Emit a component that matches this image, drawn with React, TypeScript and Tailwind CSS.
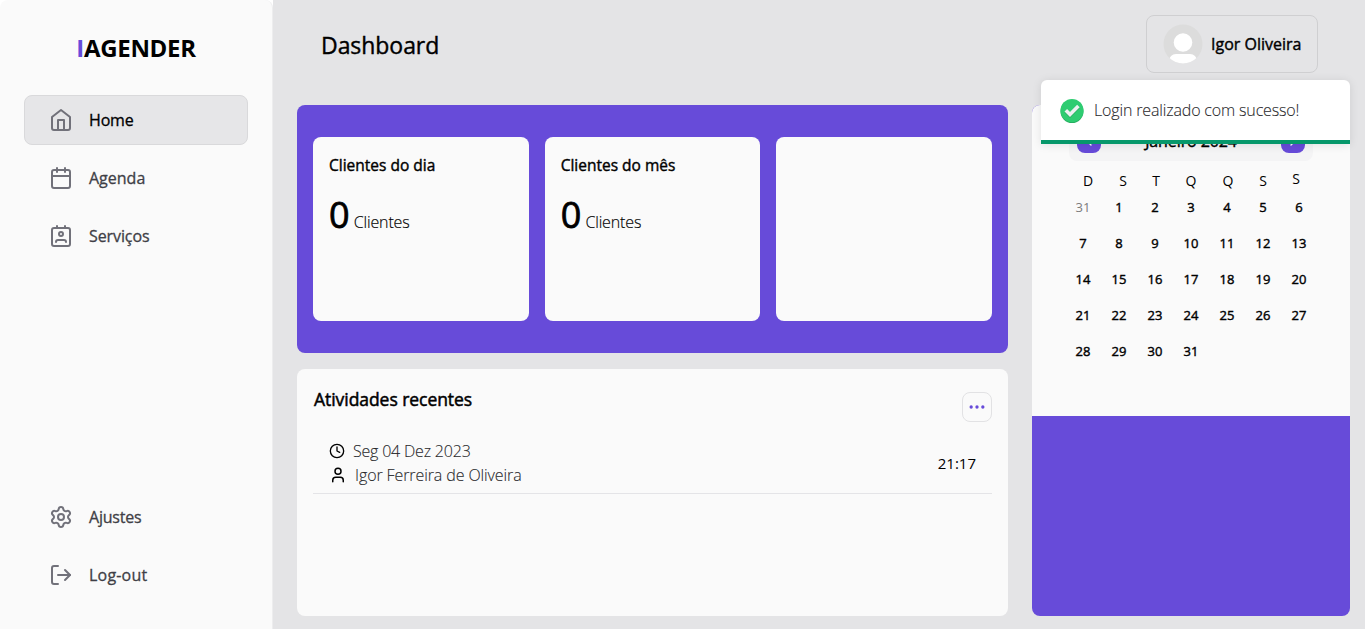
import type { ReactNode } from "react";
import { Calendar, ChevronLeft, ChevronRight, Clock, Ellipsis, LogOut, Settings, User } from "lucide-react";

function HomeIcon() {
  return (
    <svg viewBox="0 0 24 24" className="size-6" fill="none" stroke="currentColor" strokeWidth="2" strokeLinecap="round" strokeLinejoin="round">
      <path d="m3 9 9-7 9 7v11a2 2 0 0 1-2 2H5a2 2 0 0 1-2-2z" />
      <path d="M9 22V12h6v10" />
    </svg>
  );
}

function ContactIcon() {
  return (
    <svg viewBox="0 0 24 24" className="size-6" fill="none" stroke="currentColor" strokeWidth="2" strokeLinecap="round" strokeLinejoin="round">
      <path d="M17 18a2 2 0 0 0-2-2H9a2 2 0 0 0-2 2" />
      <rect width="18" height="18" x="3" y="4" rx="2" />
      <circle cx="12" cy="10" r="2" />
      <path d="M8 2v2M16 2v2" />
    </svg>
  );
}

function SuccessIcon() {
  return (
    <svg viewBox="0 0 24 24" className="mt-px size-6 shrink-0">
      <circle cx="12" cy="12.5" r="11.5" fill="#27ae60" />
      <circle cx="12" cy="11.5" r="11.5" fill="#2ecc71" />
      <path d="M5.8 12.2 10 16.4 18.4 8" fill="none" stroke="#27ae60" strokeWidth="3.6" />
      <path d="M5.8 11.2 10 15.4 18.4 7" fill="none" stroke="#ecf0f1" strokeWidth="3.6" />
    </svg>
  );
}

function Avatar() {
  return (
    <svg viewBox="0 0 40 40" className="size-10 shrink-0">
      <defs>
        <clipPath id="avatar-clip">
          <circle cx="20" cy="20" r="19.5" />
        </clipPath>
      </defs>
      <g clipPath="url(#avatar-clip)">
        <rect width="40" height="40" fill="#dcdcdc" />
        <circle cx="20" cy="18.5" r="9.3" fill="#fff" />
        <rect x="6" y="30" width="28" height="16" rx="7" fill="#fff" />
      </g>
    </svg>
  );
}

function NavItem({ icon, active, children, text }: { icon: ReactNode; active?: boolean; children: ReactNode; text?: string }) {
  return (
    <a className={`flex h-[50px] items-center gap-4 rounded-lg border pl-6 text-base ${active ? "border-[#d9d9db] bg-[#e6e6e8] text-black" : "border-transparent text-[#3f3f46]"}`}>
      <span className="text-[#71717a]">{icon}</span>
      <span className={`[-webkit-text-stroke:0.3px_currentColor] ${text ?? ""}`}>{children}</span>
    </a>
  );
}

function StatCard({ title, value }: { title?: string; value?: number }) {
  return (
    <div className="flex flex-col rounded-lg bg-[#fafafa] p-4">
      {title && (
        <>
          <h3 className="text-[15.5px] leading-6 [-webkit-text-stroke:0.4px_currentColor]">{title}</h3>
          <p className="mt-[18px] leading-10">
            <span className="text-4xl leading-10 [-webkit-text-stroke:0.8px_currentColor]">{value}</span>{" "}
            <span className="font-light tracking-[-0.15px] [-webkit-text-stroke:0.15px_currentColor]">Clientes</span>
          </p>
        </>
      )}
    </div>
  );
}

const weekdays = [
  { label: "D", style: "pl-2.5" },
  { label: "S", style: "pl-2" },
  { label: "T", style: "pl-0.5" },
  { label: "Q", style: "" },
  { label: "Q", style: "pl-0.5" },
  { label: "S", style: "" },
  { label: "S", style: "pr-1.5 pb-1" },
];
const days = Array.from({ length: 32 }, (_, i) => i || 31);

export default function App() {
  return (
    <div className="relative flex h-[629px] w-[1365px] overflow-hidden bg-[#e4e4e6] font-['Open_Sans',sans-serif] text-base text-black">
      <div className="w-[273px] shrink-0 bg-white">
        <aside className="flex h-full flex-col rounded-t-lg border-r border-[#ededee] bg-[#fafafa] px-6 pb-[29px]">
          <h1 className="mt-7 h-[39px] text-center text-2xl leading-10 font-bold tracking-[-0.3px]">
            <span className="text-[#674bd9]">I</span>AGENDER
          </h1>
          <nav className="mt-7 flex flex-col gap-2">
            <NavItem icon={<HomeIcon />} active text="tracking-[-0.15px]">Home</NavItem>
            <NavItem icon={<Calendar className="size-6" />}>Agenda</NavItem>
            <NavItem icon={<ContactIcon />} text="tracking-[-0.1px]">Serviços</NavItem>
          </nav>
          <nav className="mt-auto flex flex-col gap-2">
            <NavItem icon={<Settings className="size-6" />} text="tracking-[-0.2px]">Ajustes</NavItem>
            <NavItem icon={<LogOut className="size-6" />} text="tracking-[0.2px]">Log-out</NavItem>
          </nav>
        </aside>
      </div>

      <div className="flex flex-1 flex-col pr-[15px] pb-[13px] pl-6">
        <header className="flex h-[105px] shrink-0 items-start justify-between pt-[15px] pr-8 pl-6">
          <h2 className="pt-2.5 text-[23px] leading-10 tracking-[-0.05px] [-webkit-text-stroke:0.4px_currentColor]">Dashboard</h2>
          <button className="flex h-[58px] w-[172px] items-center gap-2 rounded-lg border border-[#cfcfd1] pl-4">
            <Avatar />
            <span className="whitespace-nowrap [-webkit-text-stroke:0.4px_currentColor]">Igor Oliveira</span>
          </button>
        </header>

        <div className="flex min-h-0 flex-1 gap-6">
          <main className="flex w-[711px] flex-col gap-4">
            <section className="grid h-[248px] grid-cols-3 gap-4 rounded-lg bg-[#674bd9] px-4 py-8">
              <StatCard title="Clientes do dia" value={0} />
              <StatCard title="Clientes do mês" value={0} />
              <StatCard />
            </section>

            <section className="flex-1 rounded-lg bg-[#fafafa] px-4">
              <div className="flex h-[54px] justify-between">
                <h3 className="pt-4 pl-px text-[17.5px] leading-7 tracking-[-0.05px] [-webkit-text-stroke:0.5px_currentColor]">Atividades recentes</h3>
                <button className="mt-[23px] grid size-[30px] place-items-center rounded-lg border border-[#e2e2e4]">
                  <Ellipsis className="size-5 text-[#674bd9]" />
                </button>
              </div>
              <div className="mt-4 flex h-[55px] items-start justify-between border-b border-[#e4e4e7] px-4 font-light">
                <div className="tracking-[-0.1px] text-[#27272a]">
                  <p className="flex h-6 items-center gap-2">
                    <Clock className="size-4 text-black" />
                    <span className="tracking-[-0.2px] [-webkit-text-stroke:0.1px_currentColor]">Seg 04 Dez 2023</span>
                  </p>
                  <p className="flex h-6 items-center gap-2">
                    <User className="size-[18px] text-black" />
                    <span className="[-webkit-text-stroke:0.1px_currentColor]">Igor Ferreira de Oliveira</span>
                  </p>
                </div>
                <time className="text-[15px] leading-[49px] font-normal">21:17</time>
              </div>
            </section>
          </main>

          <section className="flex w-[318px] flex-col overflow-hidden rounded-lg bg-[#674bd9]">
            <div className="h-[311px] bg-[#fafafa] px-[33px] pt-4">
              <div className="mx-1 flex h-10 items-center justify-between rounded-lg bg-[#f4f4f5] px-2">
                <button className="grid size-6 place-items-center rounded-lg bg-[#674bd9] text-white"><ChevronLeft className="size-4" /></button>
                <span className="tracking-[-0.1px] [-webkit-text-stroke:0.4px_currentColor]">Janeiro 2024</span>
                <button className="grid size-6 place-items-center rounded-lg bg-[#674bd9] text-white"><ChevronRight className="size-4" /></button>
              </div>
              <div className="mt-2 grid h-[21px] grid-cols-[repeat(7,36px)] text-sm leading-6">
                {weekdays.map((d, i) => (
                  <span key={i} className={`flex h-6 items-center justify-center ${d.style}`}>{d.label}</span>
                ))}
              </div>
              <div className="grid grid-cols-[repeat(7,36px)]">
                {days.map((d, i) => (
                  <span key={i} className={`grid h-9 place-items-center text-[13px] ${i === 0 ? "text-[#7c7c7c]" : "[-webkit-text-stroke:0.4px_currentColor]"}`}>{d}</span>
                ))}
              </div>
            </div>
          </section>
        </div>
      </div>

      <div role="status" className="absolute top-20 right-[15px] flex h-16 w-[309px] flex-col overflow-hidden rounded-t-md bg-white shadow-[0_1px_10px_0_rgba(0,0,0,0.1)]">
        <div className="flex flex-1 items-center gap-2.5 pl-[19px]">
          <SuccessIcon />
          <span className="font-light tracking-[-0.15px] text-[#27272a] [-webkit-text-stroke:0.1px_currentColor]">Login realizado com sucesso!</span>
        </div>
        <div className="h-1 bg-[#07986b]" />
      </div>
    </div>
  );
}
